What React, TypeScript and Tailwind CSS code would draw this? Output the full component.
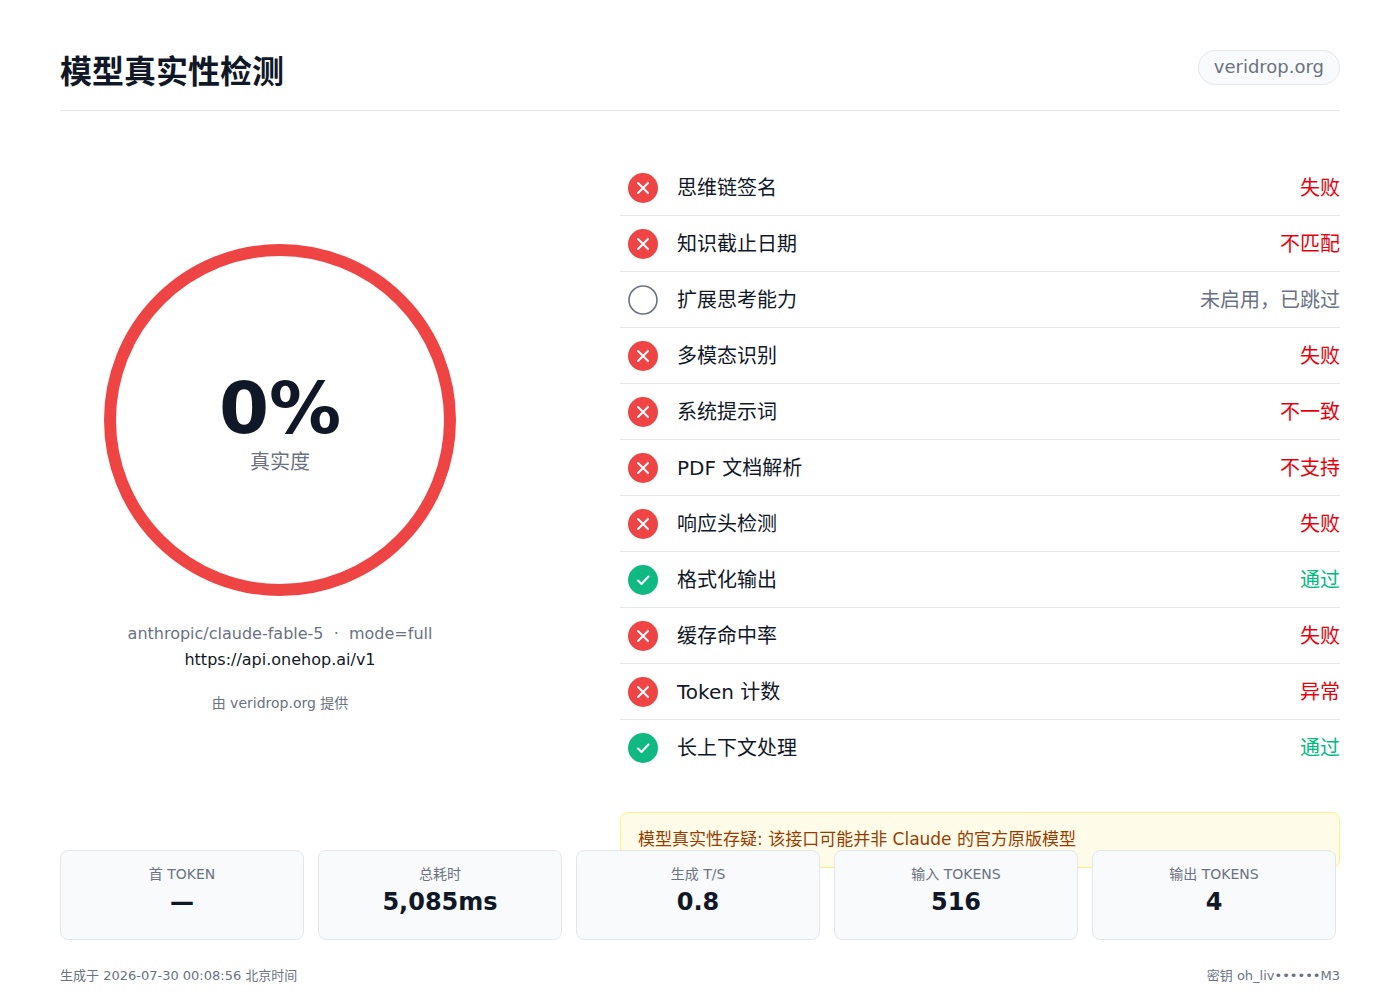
import React from 'react';

type Status = 'fail' | 'pass' | 'skip';

const checks: { name: string; result: string; status: Status }[] = [
  { name: '思维链签名', result: '失败', status: 'fail' },
  { name: '知识截止日期', result: '不匹配', status: 'fail' },
  { name: '扩展思考能力', result: '未启用，已跳过', status: 'skip' },
  { name: '多模态识别', result: '失败', status: 'fail' },
  { name: '系统提示词', result: '不一致', status: 'fail' },
  { name: 'PDF 文档解析', result: '不支持', status: 'fail' },
  { name: '响应头检测', result: '失败', status: 'fail' },
  { name: '格式化输出', result: '通过', status: 'pass' },
  { name: '缓存命中率', result: '失败', status: 'fail' },
  { name: 'Token 计数', result: '异常', status: 'fail' },
  { name: '长上下文处理', result: '通过', status: 'pass' },
];

const stats = [
  { label: '首 TOKEN', value: '—' },
  { label: '总耗时', value: '5,085ms' },
  { label: '生成 T/S', value: '0.8' },
  { label: '输入 TOKENS', value: '516' },
  { label: '输出 TOKENS', value: '4' },
];

function StatusIcon({ status }: { status: Status }) {
  if (status === 'fail') {
    return (
      <svg width="30" height="30" viewBox="0 0 30 30">
        <circle cx="15" cy="15" r="15" fill="#ef4444" />
        <path d="M10 10 L20 20 M20 10 L10 20" stroke="#fff" strokeWidth="2" strokeLinecap="round" />
      </svg>
    );
  }
  if (status === 'pass') {
    return (
      <svg width="30" height="30" viewBox="0 0 30 30">
        <circle cx="15" cy="15" r="15" fill="#10b981" />
        <path d="M10 15.5 L13.5 19 L20.5 11.5" stroke="#fff" strokeWidth="2" fill="none" strokeLinecap="round" strokeLinejoin="round" />
      </svg>
    );
  }
  return (
    <svg width="30" height="30" viewBox="0 0 30 30">
      <circle cx="15" cy="15" r="14" fill="none" stroke="#6b7280" strokeWidth="1.6" />
    </svg>
  );
}

export default function App() {
  const font = { fontFamily: '"DejaVu Sans", "Noto Sans CJK SC", sans-serif' };

  return (
    <div className="min-h-[1000px] w-[1400px] bg-white px-[60px] text-gray-900" style={font}>
      {/* Header */}
      <div className="flex items-start justify-between border-b border-gray-200 pt-[48px] pb-[14px]">
        <h1 className="text-[32px] font-semibold leading-[48px] text-gray-900">模型真实性检测</h1>
        <div className="mt-[2px] flex h-[35px] items-center rounded-full border border-gray-200 bg-gray-50 px-[15px] pb-[2px] text-[18px] text-gray-500">
          veridrop.org
        </div>
      </div>

      {/* Main */}
      <div className="mt-[49px] grid h-[690px] grid-cols-[440px_1fr] gap-[120px]">
        <div className="flex flex-col items-center pt-[84px]">
          <div className="relative h-[352px] w-[352px]">
            <svg width="352" height="352" viewBox="0 0 352 352">
              <circle cx="176" cy="176" r="170" fill="none" stroke="#ef4444" strokeWidth="12" />
            </svg>
            <div className="absolute inset-0 flex flex-col items-center justify-center pt-[8px]">
              <div className="text-[72px] font-bold leading-none text-gray-900">0%</div>
              <div className="mt-[4px] text-[20px] leading-[28px] text-gray-500">真实度</div>
            </div>
          </div>
          <div className="mt-[25px] text-[16px] leading-[26px] text-gray-500">
            anthropic/claude-fable-5 &nbsp;·&nbsp; mode=full
          </div>
          <div className="text-[16px] leading-[26px] text-gray-900">https://api.onehop.ai/v1</div>
          <div className="mt-[20px] text-[14px] leading-[20px] text-gray-500">由 veridrop.org 提供</div>
        </div>

        <div className="flex flex-col">
          <div className="flex flex-col">
            {checks.map((c, i) => (
              <div
                key={c.name}
                className={`flex h-[56px] items-center pl-[8px] ${i < checks.length - 1 ? 'border-b border-gray-200' : ''}`}
              >
                <StatusIcon status={c.status} />
                <span className="ml-[19px] text-[20px] text-gray-900">{c.name}</span>
                <span
                  className={`ml-auto text-[20px] ${
                    c.status === 'fail' ? 'text-red-600' : c.status === 'pass' ? 'text-emerald-500' : 'text-gray-500'
                  }`}
                >
                  {c.result}
                </span>
              </div>
            ))}
          </div>
          <div className="mt-[36px] rounded-lg border border-yellow-200 bg-yellow-50 px-[17px] pt-[14px] pb-[16px] text-[17px] leading-[24px] text-amber-800">
            模型真实性存疑: 该接口可能并非 Claude 的官方原版模型
          </div>
        </div>
      </div>

      {/* Stats */}
      <div className="grid w-[1276px] grid-cols-5 gap-[14px]">
        {stats.map((s) => (
          <div key={s.label} className="flex h-[90px] flex-col items-center rounded-lg border border-gray-200 bg-gray-50 pt-[13px]">
            <div className="text-[14px] leading-[20px] text-gray-500">{s.label}</div>
            <div className="mt-[2px] text-[24px] font-bold leading-[32px] text-gray-900">{s.value}</div>
          </div>
        ))}
      </div>

      {/* Footer */}
      <div className="mt-[28px] flex items-center justify-between text-[13px] leading-[16px] text-gray-500">
        <span>生成于 2026-07-30 00:08:56 北京时间</span>
        <span>密钥 oh_liv••••••M3</span>
      </div>
    </div>
  );
}
